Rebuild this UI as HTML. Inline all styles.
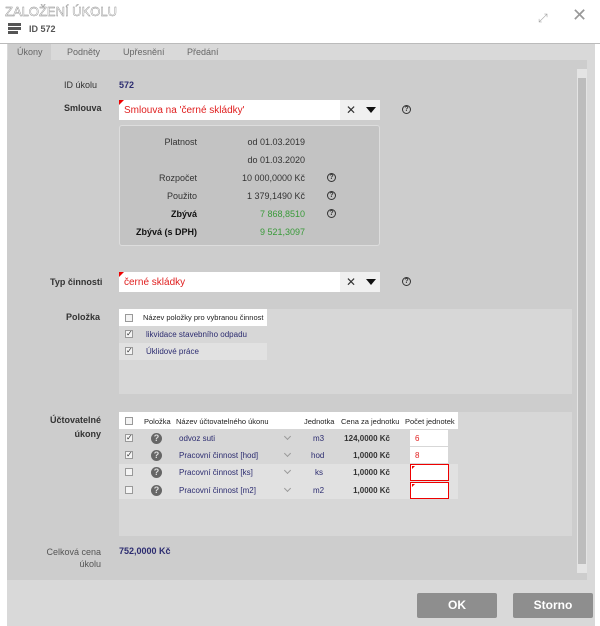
<!DOCTYPE html><html><head><meta charset="utf-8"><style>
*{margin:0;padding:0;box-sizing:border-box}
body{width:600px;height:626px;background:#fff;font-family:"Liberation Sans",sans-serif;font-size:9px;color:#333;position:relative;overflow:hidden}
.a{position:absolute}
.r{text-align:right}
.q{position:absolute;width:9px;height:9px;border:1px solid #333;border-radius:50%;font-size:7px;line-height:7px;text-align:center;font-weight:bold}
.qq{position:absolute;width:11px;height:11px;border-radius:50%;background:#666;color:#ddd;font-size:9px;line-height:11px;text-align:center;font-weight:bold}
.cb{position:absolute;width:8px;height:8px;border:1px solid #999;background:#f4f4f4;font-size:8px;line-height:6px;text-align:center}
.blue{color:#2c2c70}
.grn{color:#3a9a3a}
.red{color:#e02020}
.corner{position:absolute;left:0;top:0;width:0;height:0;border-top:5px solid #e00;border-right:5px solid transparent}
.chev{position:absolute;width:5px;height:5px;border-right:1px solid #999;border-bottom:1px solid #999;transform:rotate(45deg)}
.th{position:absolute;font-size:7.5px;color:#222}
</style></head><body>
<div class="a" style="left:5px;top:4px;font-size:13px;color:#fff;-webkit-text-stroke:0.4px #888">ZALOŽENÍ ÚKOLU</div>
<div class="a" style="left:8px;top:23px;width:13px;height:3px;background:#555"></div>
<div class="a" style="left:8px;top:27px;width:13px;height:3px;background:#555"></div>
<div class="a" style="left:8px;top:31px;width:10px;height:3px;background:#555"></div>
<div class="a" style="left:29px;top:24px;font-size:9px;font-weight:bold;color:#555">ID 572</div>
<div class="a" style="left:538px;top:11px;font-size:12px;color:#aaa">⤢</div>
<div class="a" style="left:572px;top:6px;font-size:18px;color:#999;line-height:18px">✕</div>
<div class="a" style="left:0;top:43px;width:600px;height:1px;background:#bbb"></div>
<div class="a" style="left:7px;top:44px;width:588px;height:582px;background:#d9d9d9"></div>
<div class="a" style="left:8px;top:44px;width:43px;height:16px;background:#cdcdcd"></div>
<div class="a" style="left:17px;top:47px;color:#666">Úkony</div>
<div class="a" style="left:67px;top:47px;color:#666">Podněty</div>
<div class="a" style="left:123px;top:47px;color:#666">Upřesnění</div>
<div class="a" style="left:187px;top:47px;color:#666">Předání</div>
<div class="a" style="left:7px;top:60px;width:580px;height:520px;background:#cdcdcd"></div>
<div class="a" style="left:577px;top:69px;width:10px;height:504px;background:#e4e4e4"></div>
<div class="a" style="left:578px;top:78px;width:8px;height:486px;background:#bdbdbd"></div>

<div class="a" style="left:64px;top:80px">ID úkolu</div>
<div class="a blue" style="left:119px;top:80px;font-weight:bold">572</div>
<div class="a" style="left:64px;top:103px;font-weight:bold">Smlouva</div>
<div class="a" style="left:119px;top:100px;width:261px;height:20px;background:#fff"><div class="corner"></div><div class="a red" style="left:5px;top:5px;font-size:10px">Smlouva na 'černé skládky'</div></div>
<div class="a" style="left:340px;top:100px;width:40px;height:20px;background:#f0f0f0"></div>
<div class="a" style="left:346px;top:103px;font-size:12px">✕</div>
<div class="a" style="left:366px;top:107px;border-left:5px solid transparent;border-right:5px solid transparent;border-top:6px solid #111"></div>
<div class="q" style="left:402px;top:105px">?</div>

<div class="a" style="left:119px;top:125px;width:261px;height:121px;background:#c3c3c3;border:1px solid #ddd;border-radius:3px"></div>
<div class="a r" style="left:120px;top:137px;width:77px">Platnost</div>
<div class="a r" style="left:120px;top:173px;width:77px">Rozpočet</div>
<div class="a r" style="left:120px;top:191px;width:77px">Použito</div>
<div class="a r" style="left:120px;top:209px;width:77px;font-weight:bold;color:#111">Zbývá</div>
<div class="a r" style="left:120px;top:227px;width:77px;font-weight:bold;color:#111">Zbývá (s DPH)</div>
<div class="a r" style="left:230px;top:137px;width:75px">od 01.03.2019</div>
<div class="a r" style="left:230px;top:155px;width:75px">do 01.03.2020</div>
<div class="a r" style="left:220px;top:173px;width:85px">10 000,0000 Kč</div>
<div class="a r" style="left:220px;top:191px;width:85px">1 379,1490 Kč</div>
<div class="a r grn" style="left:220px;top:209px;width:85px">7 868,8510</div>
<div class="a r grn" style="left:220px;top:227px;width:85px">9 521,3097</div>
<div class="q" style="left:327px;top:173px">?</div>
<div class="q" style="left:327px;top:191px">?</div>
<div class="q" style="left:327px;top:209px">?</div>

<div class="a" style="left:50px;top:277px;font-weight:bold">Typ činnosti</div>
<div class="a" style="left:119px;top:272px;width:261px;height:20px;background:#fff"><div class="corner"></div><div class="a red" style="left:5px;top:5px;font-size:10px">černé skládky</div></div>
<div class="a" style="left:340px;top:272px;width:40px;height:20px;background:#f0f0f0"></div>
<div class="a" style="left:346px;top:275px;font-size:12px">✕</div>
<div class="a" style="left:366px;top:279px;border-left:5px solid transparent;border-right:5px solid transparent;border-top:6px solid #111"></div>
<div class="q" style="left:402px;top:277px">?</div>

<div class="a" style="left:66px;top:312px;font-weight:bold">Položka</div>
<div class="a" style="left:119px;top:309px;width:453px;height:85px;background:#d7d7d7"></div>
<div class="a" style="left:119px;top:309px;width:148px;height:17px;background:#fff"></div>
<div class="cb" style="left:125px;top:314px"></div>
<div class="th" style="left:143px;top:313px">Název položky pro vybranou činnost</div>
<div class="a" style="left:119px;top:343px;width:148px;height:17px;background:#e1e1e1"></div>
<div class="cb" style="left:125px;top:330px">✓</div>
<div class="a blue" style="left:146px;top:330px;font-size:8px">likvidace stavebního odpadu</div>
<div class="cb" style="left:125px;top:347px">✓</div>
<div class="a blue" style="left:146px;top:347px;font-size:8px">Úklidové práce</div>

<div class="a r" style="left:30px;top:413px;width:71px;font-weight:bold;line-height:14px">Účtovatelné<br>úkony</div>
<div class="a" style="left:119px;top:412px;width:453px;height:124px;background:#d7d7d7"></div>
<div class="a" style="left:119px;top:412px;width:339px;height:17px;background:#fff"></div>
<div class="cb" style="left:125px;top:417px"></div>
<div class="th" style="left:144px;top:417px">Položka</div>
<div class="th" style="left:176px;top:417px">Název účtovatelného úkonu</div>
<div class="th" style="left:304px;top:417px">Jednotka</div>
<div class="th" style="left:341px;top:417px">Cena za jednotku</div>
<div class="th" style="left:405px;top:417px">Počet jednotek</div>
<div class="a" style="left:119px;top:464px;width:339px;height:35px;background:#e1e1e1"></div>
<div class="cb" style="left:125px;top:434px">✓</div>
<div class="cb" style="left:125px;top:451px">✓</div>
<div class="cb" style="left:125px;top:468px"></div>
<div class="cb" style="left:125px;top:486px"></div>
<div class="qq" style="left:151px;top:433px">?</div>
<div class="qq" style="left:151px;top:450px">?</div>
<div class="qq" style="left:151px;top:467px">?</div>
<div class="qq" style="left:151px;top:485px">?</div>
<div class="a blue" style="left:179px;top:434px;font-size:8px">odvoz suti</div>
<div class="a blue" style="left:179px;top:451px;font-size:8px">Pracovní činnost [hod]</div>
<div class="a blue" style="left:179px;top:468px;font-size:8px">Pracovní činnost [ks]</div>
<div class="a blue" style="left:179px;top:486px;font-size:8px">Pracovní činnost [m2]</div>
<div class="chev" style="left:285px;top:434px"></div>
<div class="chev" style="left:285px;top:451px"></div>
<div class="chev" style="left:285px;top:468px"></div>
<div class="chev" style="left:285px;top:486px"></div>
<div class="a blue" style="left:313px;top:434px;font-size:8px">m3</div>
<div class="a blue" style="left:311px;top:451px;font-size:8px">hod</div>
<div class="a blue" style="left:315px;top:468px;font-size:8px">ks</div>
<div class="a blue" style="left:313px;top:486px;font-size:8px">m2</div>
<div class="a r" style="left:335px;top:434px;width:55px;font-size:8px;font-weight:bold">124,0000 Kč</div>
<div class="a r" style="left:335px;top:451px;width:55px;font-size:8px;font-weight:bold">1,0000 Kč</div>
<div class="a r" style="left:335px;top:468px;width:55px;font-size:8px;font-weight:bold">1,0000 Kč</div>
<div class="a r" style="left:335px;top:486px;width:55px;font-size:8px;font-weight:bold">1,0000 Kč</div>
<div class="a" style="left:410px;top:430px;width:38px;height:16px;background:#fff"></div>
<div class="a red" style="left:415px;top:434px;font-size:8px">6</div>
<div class="a" style="left:410px;top:447px;width:38px;height:16px;background:#fff"></div>
<div class="a red" style="left:415px;top:451px;font-size:8px">8</div>
<div class="a" style="left:410px;top:464px;width:39px;height:17px;background:#fff;border:1px solid #e00"><div class="corner" style="left:1px;top:1px;border-top-width:3px;border-right-width:3px"></div></div>
<div class="a" style="left:410px;top:482px;width:39px;height:17px;background:#fff;border:1px solid #e00"><div class="corner" style="left:1px;top:1px;border-top-width:3px;border-right-width:3px"></div></div>

<div class="a r" style="left:30px;top:546px;width:71px;line-height:12px;color:#555">Celková cena<br>úkolu</div>
<div class="a blue" style="left:119px;top:546px;font-weight:bold">752,0000 Kč</div>

<div class="a" style="left:417px;top:593px;width:80px;height:25px;background:#8e8e8e;border-radius:2px;color:#fff;font-weight:bold;font-size:12px;text-align:center;line-height:25px">OK</div>
<div class="a" style="left:513px;top:593px;width:80px;height:25px;background:#8e8e8e;border-radius:2px;color:#fff;font-weight:bold;font-size:12px;text-align:center;line-height:25px">Storno</div>
</body></html>
